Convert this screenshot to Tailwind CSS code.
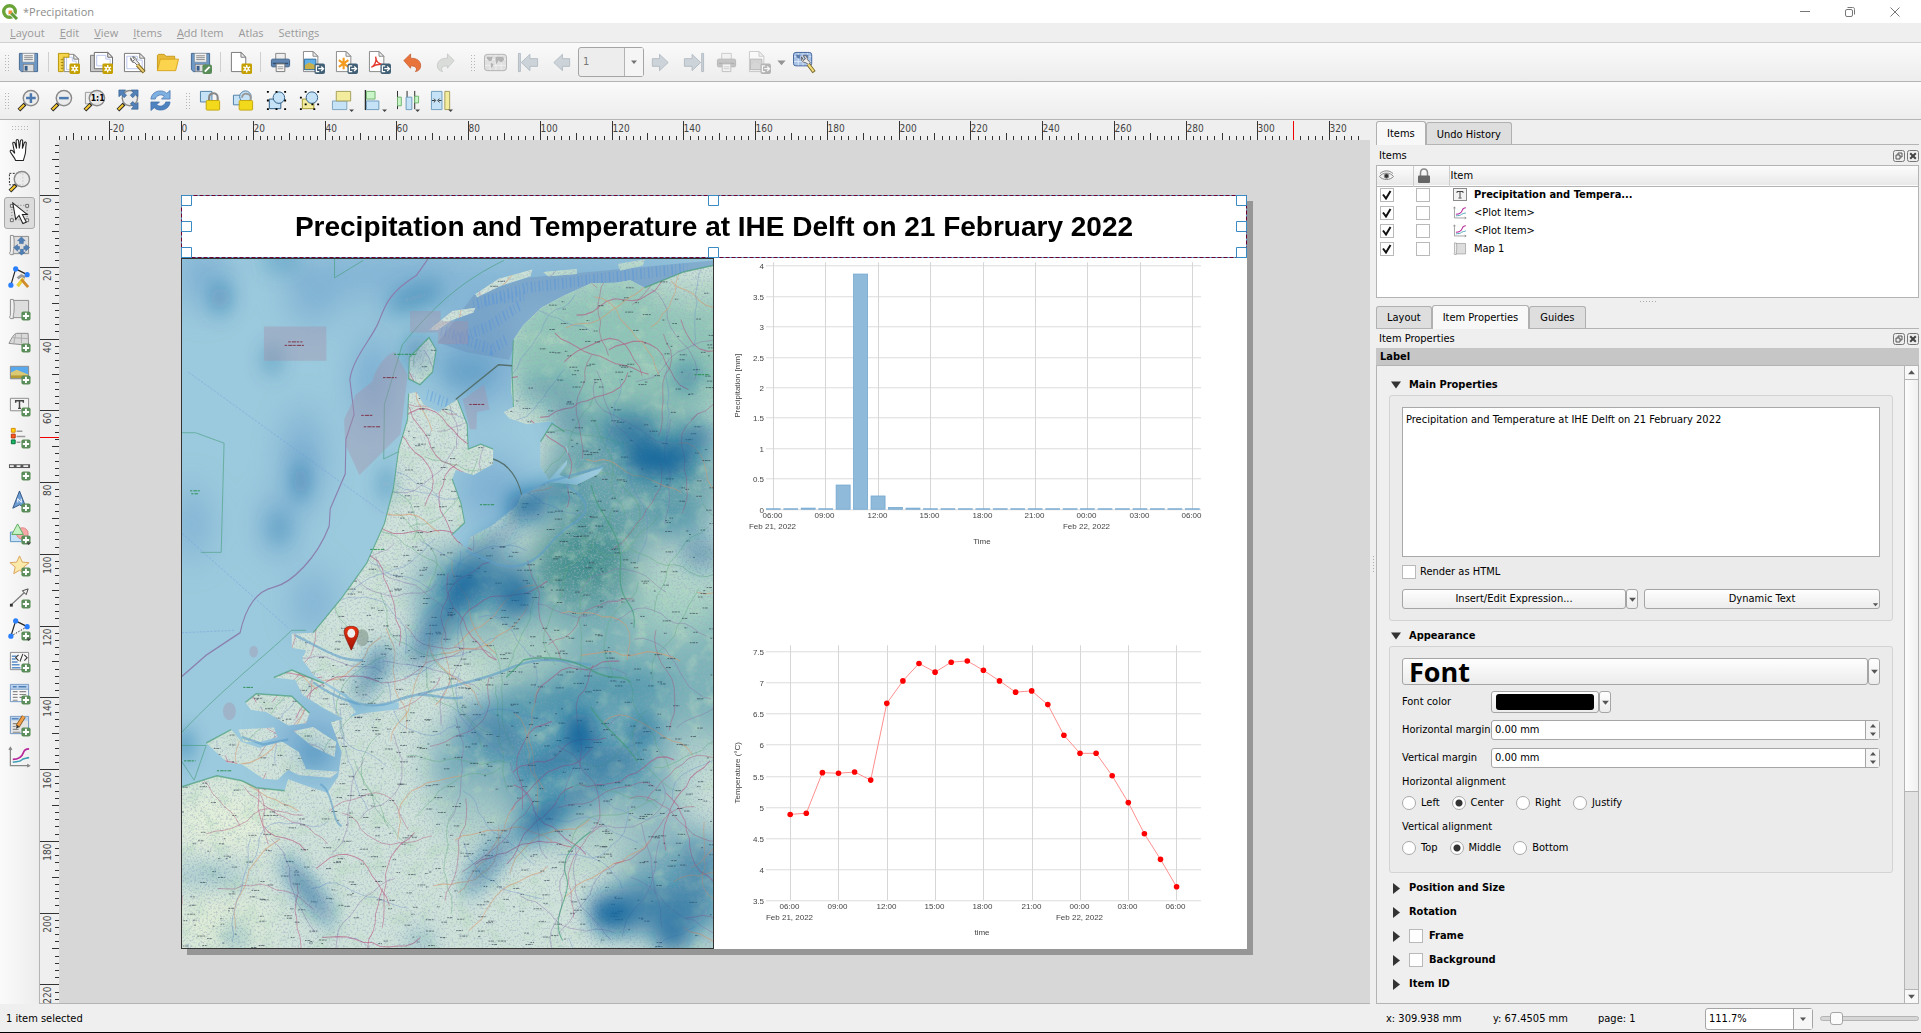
<!DOCTYPE html>
<html lang="en">
<head>
	<meta charset="utf-8">
	<title>*Precipitation</title>
	<script src="https://cdn.jsdelivr.net/npm/@tailwindcss/browser@4"></script>
</head>
<body class="h-screen flex flex-col overflow-hidden bg-[#efefef] text-black text-[11px] leading-[14px] font-['DejaVu_Sans_Condensed','DejaVu_Sans',sans-serif] border-b border-black">

	<!-- icon sprite -->
	<svg class="hidden">
		<symbol id="b-star" viewBox="0 0 24 24"><rect x="13" y="13" width="11" height="11" rx="1.500" fill="#c4a000"/><path d="M18.500 14.500v8M15 16.500l7 4M22 16.500l-7 4" stroke="#fff" stroke-width="1.400"/><circle cx="18.500" cy="18.500" r="2.300" fill="#fff"/><circle cx="18.500" cy="18.500" r="1" fill="#c4a000"/></symbol>
		<symbol id="b-plus" viewBox="0 0 24 24"><rect x="14" y="14" width="9.500" height="9.500" rx="2" fill="#5a8c5a"/><path d="M18.700 15.500v6.500M15.500 18.700h6.500" stroke="#fff" stroke-width="2"/></symbol>
		<symbol id="b-exp" viewBox="0 0 24 24"><rect x="13" y="13" width="11" height="11" rx="2" fill="#415f75"/><path d="M18 15.500h-3v6h3M17 18.500h5M20 16.200l2.500 2.300-2.500 2.300" fill="none" stroke="#fff" stroke-width="1.300"/></symbol>
		<symbol id="b-drop" viewBox="0 0 24 24"><path d="M19 21.500h5l-2.500 2.500z" fill="#444"/></symbol>

		<symbol id="save" viewBox="0 0 24 24"><path d="M2.500 2.500h19v19H4.500l-2-2z" fill="#6d97c4" stroke="#44678f"/><rect x="6" y="2.500" width="12" height="9" fill="#f4f4f4" stroke="#999" stroke-width=".6"/><path d="M7.500 5h9M7.500 7h9M7.500 9h9" stroke="#777" stroke-width=".9"/><rect x="6.500" y="14" width="11" height="7.500" fill="#ddd" stroke="#777" stroke-width=".6"/><rect x="8" y="15.500" width="3" height="5" fill="#355c8a"/></symbol>
		<symbol id="savetpl" viewBox="0 0 24 24"><use href="#save"/><rect x="14" y="14" width="10" height="10" rx="2" fill="#5a8c5a"/><path d="M16.500 21.500l5-5" stroke="#fff" stroke-width="2"/></symbol>
		<symbol id="newlayout" viewBox="0 0 24 24"><path d="M7.500 3.500h10l5 5v13h-15z" fill="#fff" stroke="#888"/><path d="M17.500 3.500v5h5z" fill="#eee" stroke="#777"/><path d="M10 6.500h6v4h4v9H10z" fill="none" stroke="#b8c6ee"/><path d="M1.500 2.500h11v4h-6v15h-5z" fill="#f5d54c" stroke="#b6930a"/><path d="M4 9h2.500M4 12h2.500M4 15h2.500M4 18h2.500" stroke="#8d7208" stroke-width=".8"/><use href="#b-star"/></symbol>
		<symbol id="dup" viewBox="0 0 24 24"><path d="M.5 4.500h17v17H.500z" fill="#c9c9c9" stroke="#777"/><path d="M4.500 1.500h14l5 5v12h-19z" fill="#fff" stroke="#666"/><path d="M18.500 1.500v5h5z" fill="#eee" stroke="#666"/><path d="M7 4.500h9.500v4H21v7H7z" fill="none" stroke="#b8c6ee"/><use href="#b-star"/></symbol>
		<symbol id="manager" viewBox="0 0 24 24"><path d="M1.500 2.500h16l5 5v14h-21z" fill="#fff" stroke="#777"/><path d="M17.500 2.500v5h5z" fill="#eee" stroke="#777"/><path d="M4 5.500h11v4h5v9H4z" fill="none" stroke="#b8c6ee"/><path d="M8 7c0 3 1 5 4 5l3 3 2-2-3-3c0-3-2-4-4-4l2 3-2 2z" fill="#eee" stroke="#555" stroke-width=".9"/><path d="M15 14.500l7 7.500" stroke="#7c6620" stroke-width="4"/><path d="M15 14.500l6.500 7" stroke="#f0d070" stroke-width="2"/></symbol>
		<symbol id="folder" viewBox="0 0 24 24"><path d="M1.500 20.500v-16l1-1h6l2 2h9v3" fill="#e8bc3a" stroke="#c79a1c"/><path d="M1.500 20.500l3-12h19l-3 12z" fill="#fbd34c" stroke="#d6a520"/></symbol>
		<symbol id="addpage" viewBox="0 0 24 24"><path d="M2.500 1.500h10l5 5v15h-15z" fill="#fff" stroke="#777"/><path d="M12.500 1.500v5h5z" fill="#eee" stroke="#777"/><use href="#b-star"/></symbol>
		<symbol id="print" viewBox="0 0 24 24"><path d="M7 9V2.500h10V9" fill="#eee" stroke="#888"/><rect x="2.500" y="8.500" width="19" height="8" rx="1.500" fill="#5f86b3" stroke="#3f5f85"/><path d="M4 13h16" stroke="#334f70" stroke-width="1.500"/><path d="M7.500 13.500h9v8h-9z" fill="#f7f7f7" stroke="#777"/><path d="M9 16.500h6M9 18.500h6" stroke="#999"/></symbol>
		<symbol id="eximg" viewBox="0 0 24 24"><path d="M1.500.5h10l5 5v16h-15z" fill="#fff" stroke="#888"/><path d="M11.500.5v5h5z" fill="#eee" stroke="#888"/><path d="M2.500 8.500h12v11h-12z" fill="#5fb0ea"/><path d="M2.500 15l5-3 7 3v4.500h-12z" fill="#c9b04a"/><path d="M2.500 8.500h12v11h-12z" fill="none" stroke="#2d6b9c"/><use href="#b-exp"/></symbol>
		<symbol id="exsvg" viewBox="0 0 24 24"><path d="M1.500.5h10l5 5v16h-15z" fill="#fff" stroke="#888"/><path d="M11.500.5v5h5z" fill="#eee" stroke="#888"/><path d="M9 7v12M4 9.500l10 7M14 9.500l-10 7" stroke="#f39a1f" stroke-width="2.200"/><use href="#b-exp"/></symbol>
		<symbol id="expdf" viewBox="0 0 24 24"><path d="M1.500.5h10l5 5v16h-15z" fill="#fff" stroke="#888"/><path d="M11.500.5v5h5z" fill="#eee" stroke="#888"/><path d="M3.500 17c4-2 5.500-7 4.500-11 .5 5 3 7.500 7 8-4-.5-8 .5-11.500 3" fill="none" stroke="#e23b2e" stroke-width="1.400"/><use href="#b-exp"/></symbol>
		<symbol id="undo" viewBox="0 0 24 24"><path d="M3 10l7-7v4.500c7 0 10.500 3 10.500 8 0 3-2 5.500-5.500 6 2-2 2-6-5-6V18z" fill="#e8743b" stroke="#c4572a" stroke-width=".8"/></symbol>
		<symbol id="redo" viewBox="0 0 24 24"><path d="M21 10l-7-7v4.500c-7 0-10.500 3-10.500 8 0 3 2 5.500 5.500 6-2-2-2-6 5-6V18z" fill="#d9dcd9" stroke="#c2c6c2" stroke-width=".8"/></symbol>
		<symbol id="atlas" viewBox="0 0 24 24"><rect x=".5" y="3.500" width="23" height="17" rx="3" fill="#c9d5e6" stroke="#6d86ae"/><path d="M1 9h22M1 15h22M6.500 4v16M12.500 4v16M18 4v16" stroke="#eef3fa" stroke-width=".9"/><path d="M3 6h6l-1 4-2 1-3-3zM7 12l3 2-2 4-1-2zM12 6l8 0 1 3-3 3-3-2-2 4-1-4z" fill="#6f8bb3"/></symbol>
		<symbol id="atlasset" viewBox="0 0 24 24"><rect x=".5" y="1.500" width="19" height="14" rx="2.500" fill="#a9c3e6" stroke="#3f629a"/><path d="M1 6h18M1 11h18M5.500 2v13M10.500 2v13M15 2v13" stroke="#e8eef7" stroke-width=".8"/><path d="M3 4h5l-1 4-3-1zM10 4h6l0 3-4 1z" fill="#5f7fae"/><path d="M9 6c-1 4 1 6 4 6l3 2 2-2-3-3c0-3-2-5-4-4l2 3-2 2z" fill="#eee" stroke="#555" stroke-width=".9"/><path d="M16 14l6 8" stroke="#75622a" stroke-width="4"/><path d="M16 14l5.500 7.300" stroke="#f2dc78" stroke-width="2.200"/></symbol>
		<symbol id="prev" viewBox="0 0 24 24"><path d="M4 12l9-8.500V8h7.500v8H13v4.500z" fill="#bcc6cf" stroke="#9aa5b0"/></symbol>
		<symbol id="next" viewBox="0 0 24 24"><path d="M20 12l-9-8.500V8H3.500v8H11v4.500z" fill="#bcc6cf" stroke="#9aa5b0"/></symbol>
		<symbol id="first" viewBox="0 0 24 24"><path d="M1.500 2.500h2v19h-2z" fill="#bcc6cf" stroke="#9aa5b0"/><path d="M4.500 12l9-8.500V8h8v8h-8v4.500z" fill="#bcc6cf" stroke="#9aa5b0"/></symbol>
		<symbol id="last" viewBox="0 0 24 24"><path d="M20.500 2.500h2v19h-2z" fill="#bcc6cf" stroke="#9aa5b0"/><path d="M19.500 12l-9-8.500V8h-8v8h8v4.500z" fill="#bcc6cf" stroke="#9aa5b0"/></symbol>

		<symbol id="lens" viewBox="0 0 24 24"><path d="M8.500 15.500L2 22" stroke="#222" stroke-width="4"/><path d="M7.500 16.500L2.500 21.500" stroke="#f5c731" stroke-width="2.200"/><circle cx="14.500" cy="9.500" r="8" fill="#eaeaea" fill-opacity=".85" stroke="#8a8a8a" stroke-width="1.500"/></symbol>
		<symbol id="zin" viewBox="0 0 24 24"><use href="#lens"/><path d="M14.500 4.500v10M9.500 9.500h10" stroke="#4b78ae" stroke-width="2.600"/></symbol>
		<symbol id="zout" viewBox="0 0 24 24"><use href="#lens"/><path d="M9.500 9.500h10" stroke="#4b78ae" stroke-width="2.600"/></symbol>
		<symbol id="zact" viewBox="0 0 24 24"><path d="M2.500 3.500h14v12h-14z" fill="#eee" stroke="#999"/><use href="#lens"/><text x="8" y="13" font-size="9" font-weight="700">1:1</text></symbol>
		<symbol id="zfull" viewBox="0 0 24 24"><use href="#lens"/><path d="M3 1h7L8 3.500l3 3-2.500 2.500-3-3L3 8zM23 1h-7l2 2.500-3 3 2.500 2.500 3-3L23 8zM23 21h-7l2-2.500-3-3 2.500-2.500 3 3L23 14z" fill="#5381b8" stroke="#34608f" stroke-width=".7"/></symbol>
		<symbol id="refresh" viewBox="0 0 24 24"><path d="M2 10.500C2.500 5 7 2 12 2c3 0 5 1 6.500 2.500L22 1.500v9h-9l3-3C13 5 8 6 6.500 10.500z" fill="#7fb0e2" stroke="#3c6ca8" stroke-width=".7"/><path d="M22 13.500c-.5 5.500-5 8.500-10 8.500-3 0-5-1-6.500-2.500L2 22.500v-9h9l-3 3c3 2.500 8 1.500 9.500-3z" fill="#4f83c0" stroke="#3c6ca8" stroke-width=".7"/></symbol>
		<symbol id="lock" viewBox="0 0 24 24"><path d="M1.500 2.500h12v11h-12z" fill="#c5e2f7" stroke="#4e7fa6"/><path d="M10.500 13V9c0-6 9-6 9 0v4" fill="none" stroke="#888" stroke-width="2.200"/><rect x="7.500" y="12" width="14" height="10" rx="1" fill="#f2d91c" stroke="#c2a60c"/></symbol>
		<symbol id="unlock" viewBox="0 0 24 24"><path d="M1.500 6.500h12v10h-12z" fill="#c5e2f7" stroke="#4e7fa6"/><circle cx="14" cy="8" r="6" fill="#c5e2f7" stroke="#4e7fa6"/><path d="M10.500 9c0-6 9-5 9 0v4" fill="none" stroke="#999" stroke-width="2"/><rect x="7.500" y="12" width="14" height="10" rx="1" fill="#f2d91c" stroke="#c2a60c"/></symbol>
		<symbol id="group" viewBox="0 0 24 24"><path d="M4.500 10.500h12v10h-12z" fill="#c5e2f7" stroke="#2e5d85"/><circle cx="14.500" cy="9" r="6" fill="#c5e2f7" stroke="#2e5d85"/><path d="M2 2h2v2H2zM11 2h2v2h-2zM20 2h2v2h-2zM2 11h2v2H2zM20 11h2v2h-2zM2 20h2v2H2zM11 20h2v2h-2zM20 20h2v2h-2z"/></symbol>
		<symbol id="ungroup" viewBox="0 0 24 24"><path d="M4.500 10.500h12v10h-12z" fill="#f3ec9c" stroke="#a3992f"/><circle cx="14.500" cy="9" r="6" fill="#c5e2f7" stroke="#2e5d85"/><path d="M7 2h2v2H7zM20 2h2v2h-2zM2 8h2v2H2zM7 15h2v2H7zM14 15h2v2h-2zM20 15h2v2h-2zM2 20h2v2H2zM16 20h2v2h-2z"/></symbol>
		<symbol id="raise" viewBox="0 0 24 24"><path d="M1.500 12.500h15v9h-15z" fill="#c5e2f7" stroke="#7da3bd"/><path d="M5.500 2.500h15v10h-15z" fill="#f3ec9c" stroke="#a39d5c"/><use href="#b-drop"/></symbol>
		<symbol id="align" viewBox="0 0 24 24"><path d="M1.500 1v21" stroke="#222" stroke-width="1.400"/><path d="M2.500 2.500h9v8h-9z" fill="#c9f5c9" stroke="#6db36d"/><path d="M2.500 12.500h13v9h-13z" fill="#c5e2f7" stroke="#6d9dbd"/><use href="#b-drop"/></symbol>
		<symbol id="dist" viewBox="0 0 24 24"><path d="M.5 2v19M10.500 2v19M18.500 2v19" stroke="#222"/><path d="M.5 8.500h4v9h-4zM18.500 7.500h4v7h-4z" fill="#c9f5c9" stroke="#6db36d"/><path d="M9.500 8.500h6v13h-6z" fill="#c5e2f7" stroke="#6d9dbd"/><use href="#b-drop"/></symbol>
		<symbol id="resize" viewBox="0 0 24 24"><path d="M1.500 2.500h11v19h-11z" fill="#c5e2f7" stroke="#6d9dbd"/><path d="M15.500 2.500h5v19h-5z" fill="#f3ec9c" stroke="#a39d5c"/><path d="M2 12h3M9 12h3M4 10l2 2-2 2M10 10l-2 2 2 2" fill="none" stroke="#333"/><use href="#b-drop"/></symbol>

		<symbol id="pan" viewBox="0 0 24 24"><path d="M8 23.500c-1-3-4-6-5.500-9-.7-1.500 1-2.500 2.500-1l2 2.500L5 6c-.3-2 2-2 2.300-.5L9 11 8.500 3c0-2 2.300-2 2.500 0l.8 8L13 3c.3-1.700 2.500-1.500 2.300.3L15 11l2-6c.6-1.400 2.300-1 2 .8-.7 4-.3 7-1 10.700l-2 7z" fill="#fff" stroke="#222" stroke-width="1.100"/></symbol>
		<symbol id="zoom" viewBox="0 0 24 24"><path d="M1.500 3.500h14v12h-14z" fill="none" stroke="#222" stroke-dasharray="2 1.500"/><use href="#lens"/></symbol>
		<symbol id="select" viewBox="0 0 24 24"><path d="M4 3.500h16v15H4z" fill="none" stroke="#777" stroke-dasharray="1 2"/><path d="M2.500 2.500h3v3h-3zM18.500 2.500h3v3h-3zM2.500 17.500h3v3h-3zM18.500 17.500h3v3h-3z" fill="#eee" stroke="#666"/><path d="M5 1l3 17 3.500-4 4 8.500 3.500-1.500-4-8h5z" fill="#fff" stroke="#222" stroke-width="1.100"/></symbol>
		<symbol id="scroll" viewBox="0 0 24 24"><path d="M4.500 2.500h17v18h-17z" fill="#ddd" stroke="#8b8b8b"/><path d="M2.500 1.500h3c1.500 3 1 14 0 17v3h-3c-1-1-1-3 0-3z" fill="#f0f0f0" stroke="#8b8b8b"/></symbol>
		<symbol id="movec" viewBox="0 0 24 24"><use href="#scroll"/><path d="M14 3l4 4h-2v3h-4V7h-2zM6 14l4-3v2h2v3h-2v2zM22.500 14l-4-3v2h-2v3h2v2zM14 22l-3-3h2v-3h3v3h2z" fill="#4f7fb5" stroke="#335f92" stroke-width=".5"/></symbol>
		<symbol id="nodes" viewBox="0 0 24 24"><path d="M3 20L8 3l12 6" fill="none" stroke="#222" stroke-width="1.200"/><path d="M10 13l4-3 4 2" fill="none" stroke="#999" stroke-width="3"/><path d="M16 13l-6 8" stroke="#e8cf3a" stroke-width="3.500"/><path d="M14 14l7 8" stroke="#d08a2a" stroke-width="3"/><circle cx="8" cy="3" r="2.700" fill="#2a7fff"/><circle cx="20" cy="9" r="2.700" fill="#2a7fff"/><circle cx="3" cy="20" r="2.700" fill="#2a7fff"/></symbol>
		<symbol id="addmap" viewBox="0 0 24 24"><use href="#scroll"/><use href="#b-plus"/></symbol>
		<symbol id="add3d" viewBox="0 0 24 24"><path d="M1 14C4 8 6 4 9 3.500h12L21.500 16z" fill="#d9d9d9" stroke="#8b8b8b"/><path d="M5 8l16 1M8 4l-2 10M14 4v10" fill="none" stroke="#aaa"/><use href="#b-plus"/></symbol>
		<symbol id="addpic" viewBox="0 0 24 24"><path d="M2.500 4.500h19v13h-19z" fill="#58a8ee"/><path d="M3 11l6-3 12 5v4H3z" fill="#dcc973"/><path d="M3 14h18v3H3z" fill="#b59b35"/><path d="M2.500 4.500h19v13h-19z" fill="none" stroke="#8b8b8b"/><use href="#b-plus"/></symbol>
		<symbol id="addlabel" viewBox="0 0 24 24"><path d="M2.500 4.500h19v13h-19z" fill="#f3f3f3" stroke="#8b8b8b"/><path d="M8 9V7h8v2M12 7v8M10.500 15h3" fill="none" stroke="#444" stroke-width="1.500"/><use href="#b-plus"/></symbol>
		<symbol id="addleg" viewBox="0 0 24 24"><path d="M3.500 2.500h4v4h-4z" fill="#ffd60a" stroke="#d48806"/><path d="M3.500 8.500h4v4h-4z" fill="#ff5a1f" stroke="#b53209"/><path d="M3.500 14.500h4v4h-4z" fill="#17b765" stroke="#0a6e3b"/><path d="M9 5.500h6M9 11h9M9 17h4" stroke="#999" stroke-width="1.600"/><use href="#b-plus"/></symbol>
		<symbol id="addbar" viewBox="0 0 24 24"><path d="M1 8.500h22" stroke="#555" stroke-width="4"/><path d="M2 8.500h4M9 8.500h4M16 8.500h5" stroke="#eee" stroke-width="1.800"/><use href="#b-plus"/></symbol>
		<symbol id="addnorth" viewBox="0 0 24 24"><path d="M12 1L5 19l7-3.500 7 3.500z" fill="#6f9ed4" stroke="#2f5583"/><path d="M10.200 13V9l3.600 4V9" fill="none" stroke="#fff"/><use href="#b-plus"/></symbol>
		<symbol id="addshape" viewBox="0 0 24 24"><path d="M2.500 10.500h12v10h-12z" fill="#c5e2f7" stroke="#5b93c0"/><circle cx="15" cy="12" r="6" fill="#f7a8a8" stroke="#e08080"/><path d="M10 2L4 13h12z" fill="#c3f2c3" stroke="#5fa85f"/><use href="#b-plus"/><use href="#b-drop"/></symbol>
		<symbol id="addstar" viewBox="0 0 24 24"><path d="M12 2l3 6.500 7 .5-5.500 4.500L18 20.500 12 17l-6 3.500 1.500-7L2 9l7-.5z" fill="#fbe9a9" stroke="#d9a35c"/><use href="#b-plus"/></symbol>
		<symbol id="addarrow" viewBox="0 0 24 24"><path d="M3 20L18 6" stroke="#777" stroke-width="1.300"/><path d="M21 3l-2 6-4-4z" fill="#eee" stroke="#444"/><path d="M2 18.500h3v3H2z" fill="#333"/><use href="#b-plus"/></symbol>
		<symbol id="addnode" viewBox="0 0 24 24"><path d="M3 19L8 3l12 6" fill="none" stroke="#222" stroke-width="1.200"/><path d="M3 19L20 9" stroke="#222" stroke-dasharray="1.500 1.500"/><circle cx="8" cy="3" r="2.700" fill="#2a7fff"/><circle cx="20" cy="9" r="2.700" fill="#2a7fff"/><circle cx="3" cy="19" r="2.700" fill="#2a7fff"/><use href="#b-plus"/><use href="#b-drop"/></symbol>
		<symbol id="addhtml" viewBox="0 0 24 24"><path d="M2.500 2.500h19v18h-19z" fill="#f6f6f6" stroke="#8b8b8b"/><path d="M4 6.500h5M4 9.500h4M4 12.500h6M4 15.500h8M4 18.500h9" stroke="#5a8fc9" stroke-width="1.600"/><path d="M11 5L8 8l3 3M17 5l3 3-3 3M15.500 4l-3 8" fill="none" stroke="#333" stroke-width="1.100"/><use href="#b-plus"/></symbol>
		<symbol id="addtbl" viewBox="0 0 24 24"><path d="M2.500 2.500h19v18h-19z" fill="#f6f6f6" stroke="#6d93c2"/><path d="M3 3h18v4H3z" fill="#b8d2ef"/><path d="M5 5h4M11 5h8" stroke="#4f7fb5" stroke-width="1.400"/><path d="M3 7.500h18" stroke="#6d93c2"/><path d="M5 10h5M12 10h7M5 13h5M12 13h7M5 16h5M12 16h3M5 19h5" stroke="#888" stroke-width="1.200"/><use href="#b-plus"/></symbol>
		<symbol id="addfix" viewBox="0 0 24 24"><path d="M2.500 2.500h19v18h-19z" fill="#e4e4e4" stroke="#6d93c2"/><path d="M3 3h18v4H3z" fill="#b8d2ef"/><path d="M4 5h7" stroke="#4f7fb5" stroke-width="1.400"/><path d="M5 10h5M5 13h3M5 16h6M5 19h8" stroke="#888" stroke-width="1.200"/><path d="M16.500 2.500L10 13" stroke="#8a5a22" stroke-width="4.500"/><path d="M16.500 2.500L10.500 12" stroke="#f0a04b" stroke-width="2.800"/><path d="M8.500 15.500l.5-4 3 2z" fill="#333"/><use href="#b-plus"/></symbol>
		<symbol id="plot" viewBox="0 0 24 24"><path d="M2.500 1.500v19h20M1 4l1.500-2.500L4 4M20 19l2.500 1.500L20 22" fill="none" stroke="#888" stroke-width="1.300"/><path d="M5 14c5 0 9-1 11-7 1-3 3-4 6-4" fill="none" stroke="#b5269a" stroke-width="1.800"/><path d="M5 17c4-1 7 0 10-3 2-1.500 4-1 7-2" fill="none" stroke="#3e9db5" stroke-width="1.500"/></symbol>

		<symbol id="dn" viewBox="0 0 8 8"><path d="M1 2.500h6L4 6z" fill="#555"/></symbol>
		<symbol id="up" viewBox="0 0 8 8"><path d="M1 5.500h6L4 2z" fill="#555"/></symbol>
		<symbol id="dock" viewBox="0 0 12 12"><rect x=".5" y=".5" width="11" height="11" rx="2" fill="#eee" stroke="#777"/><path d="M5 5V3h4v4H7M3 5h4v4H3z" fill="none" stroke="#555"/></symbol>
		<symbol id="close" viewBox="0 0 12 12"><rect x=".5" y=".5" width="11" height="11" rx="2" fill="#eee" stroke="#777"/><path d="M3.200 3.200l5.600 5.600M8.800 3.200L3.200 8.800" stroke="#444" stroke-width="2"/></symbol>
	</svg>

	<!-- title bar -->
	<header class="h-[23px] shrink-0 bg-white flex items-center text-[#8c8c8c] font-['Open_Sans',sans-serif]">
		<svg class="ml-[2px] size-4" viewBox="0 0 16 16"><circle cx="7.500" cy="7.500" r="5.800" fill="none" stroke="#6aa338" stroke-width="3.400"/><path d="M8.500 8.500l6.500 6.500" stroke="#fff" stroke-width="4.500"/><path d="M9 9l6 6" stroke="#5f9a34" stroke-width="3"/><path d="M6.500 6.500h4l-1 3-3 1z" fill="#ee9137"/></svg>
		<span class="ml-[5px]">*Precipitation</span>
		<nav class="ml-auto mr-5 flex gap-[33px]">
			<button aria-label="Minimize"><svg class="size-3" viewBox="0 0 12 12"><path d="M1 5.500h10" stroke="#777"/></svg></button>
			<button aria-label="Restore"><svg class="size-3" viewBox="0 0 12 12" fill="none" stroke="#777"><rect x="1.500" y="3.500" width="7" height="7" rx="1.500"/><path d="M3.500 1.500h5c1.500 0 2 .5 2 2v5"/></svg></button>
			<button aria-label="Close"><svg class="size-3" viewBox="0 0 12 12"><path d="M1.500 1.500l9 9M10.500 1.500l-9 9" stroke="#777"/></svg></button>
		</nav>
	</header>

	<!-- menu -->
	<nav class="h-5 shrink-0 flex items-center gap-[15px] pl-[10px] text-[#9a9a9a] border-b border-[#d0d0d0] font-['Open_Sans',sans-serif]">
		<button><u>L</u>ayout</button><button><u>E</u>dit</button><button><u>V</u>iew</button><button><u>I</u>tems</button><button><u>A</u>dd Item</button><button>Atlas</button><button>Settings</button>
	</nav>

	<!-- toolbars -->
	<div class="h-[39px] shrink-0 flex items-center bg-linear-to-b from-[#fafafa] to-[#ededed] border-b border-[#b4b4b4] [&>button]:w-[33px] [&>button]:flex [&>button]:justify-center [&>i]:w-px [&>i]:h-5 [&>i]:mx-[3px] [&>i]:bg-[#cfcfcf] [&>button>svg]:size-[23px]">
		<b class="w-[7px] h-[17px] ml-1 mr-px bg-[radial-gradient(#b5b5b5_1px,transparent_1px)] bg-[size:3px_3px]"></b>
		<button aria-label="Save Project"><svg><use href="#save"/></svg></button>
		<i></i>
		<button aria-label="New Layout"><svg><use href="#newlayout"/></svg></button>
		<button aria-label="Duplicate Layout"><svg><use href="#dup"/></svg></button>
		<button aria-label="Layout Manager"><svg><use href="#manager"/></svg></button>
		<button aria-label="Add Items from Template"><svg><use href="#folder"/></svg></button>
		<button aria-label="Save as Template"><svg><use href="#savetpl"/></svg></button>
		<i></i>
		<button aria-label="Add Pages"><svg><use href="#addpage"/></svg></button>
		<i></i>
		<button aria-label="Print"><svg><use href="#print"/></svg></button>
		<button aria-label="Export as Image"><svg><use href="#eximg"/></svg></button>
		<button aria-label="Export as SVG"><svg><use href="#exsvg"/></svg></button>
		<button aria-label="Export as PDF"><svg><use href="#expdf"/></svg></button>
		<button aria-label="Undo"><svg><use href="#undo"/></svg></button>
		<button aria-label="Redo"><svg><use href="#redo"/></svg></button>
		<b class="w-[7px] h-[17px] ml-2 mr-[2px] bg-[radial-gradient(#b5b5b5_1px,transparent_1px)] bg-[size:3px_3px]"></b>
		<button aria-label="Preview Atlas" class="opacity-60 grayscale"><svg><use href="#atlas"/></svg></button>
		<button aria-label="First Feature" class="opacity-70"><svg><use href="#first"/></svg></button>
		<button aria-label="Previous Feature" class="opacity-70"><svg><use href="#prev"/></svg></button>
		<div class="relative w-[66px] h-[30px]">
			<select aria-label="Atlas page" class="appearance-none size-full pl-1 rounded-[3px] border border-[#a5a5a5] bg-[#ededed] text-[#777]"><option>1</option></select>
			<svg class="absolute right-px top-px w-[19px] h-7 p-[5px] bg-[#f7f7f7] border-l border-[#a5a5a5] pointer-events-none opacity-80"><use href="#dn"/></svg>
		</div>
		<button aria-label="Next Feature" class="opacity-70"><svg><use href="#next"/></svg></button>
		<button aria-label="Last Feature" class="opacity-70"><svg><use href="#last"/></svg></button>
		<button aria-label="Print Atlas" class="opacity-40 grayscale"><svg><use href="#print"/></svg></button>
		<button aria-label="Export Atlas" class="opacity-40 grayscale"><svg><use href="#eximg"/></svg></button>
		<svg class="size-[11px] mr-px opacity-60"><use href="#dn"/></svg>
		<button aria-label="Atlas Settings"><svg><use href="#atlasset"/></svg></button>
	</div>
	<div class="h-[38px] shrink-0 flex items-center bg-linear-to-b from-[#fafafa] to-[#ededed] border-b border-[#b4b4b4] [&>button]:w-[33px] [&>button]:flex [&>button]:justify-center [&_svg]:size-[23px]">
		<b class="w-[7px] h-[17px] ml-1 mr-px bg-[radial-gradient(#b5b5b5_1px,transparent_1px)] bg-[size:3px_3px]"></b>
		<button aria-label="Zoom In"><svg><use href="#zin"/></svg></button>
		<button aria-label="Zoom Out"><svg><use href="#zout"/></svg></button>
		<button aria-label="Zoom to 100%"><svg><use href="#zact"/></svg></button>
		<button aria-label="Zoom Full"><svg><use href="#zfull"/></svg></button>
		<button aria-label="Refresh View"><svg><use href="#refresh"/></svg></button>
		<b class="w-[7px] h-[17px] ml-2 mr-[2px] bg-[radial-gradient(#b5b5b5_1px,transparent_1px)] bg-[size:3px_3px]"></b>
		<button aria-label="Lock Items"><svg><use href="#lock"/></svg></button>
		<button aria-label="Unlock Items"><svg><use href="#unlock"/></svg></button>
		<button aria-label="Group"><svg><use href="#group"/></svg></button>
		<button aria-label="Ungroup"><svg><use href="#ungroup"/></svg></button>
		<button aria-label="Raise"><svg><use href="#raise"/></svg></button>
		<button aria-label="Align"><svg><use href="#align"/></svg></button>
		<button aria-label="Distribute"><svg><use href="#dist"/></svg></button>
		<button aria-label="Resize"><svg><use href="#resize"/></svg></button>
	</div>

	<main class="flex-1 min-h-0 flex">
		<!-- toolbox -->
		<div class="w-10 shrink-0 flex flex-col items-center border-r border-[#b4b4b4] bg-linear-to-r from-[#fafafa] to-[#ededed] [&>button]:w-[31px] [&>button]:h-8 [&>button]:shrink-0 [&>button]:flex [&>button]:items-center [&>button]:justify-center [&_svg]:size-[23px]">
			<b class="w-[17px] h-[6px] mt-[5px] mb-[2px] shrink-0 bg-[radial-gradient(#b5b5b5_1px,transparent_1px)] bg-[size:3px_3px]"></b>
			<button aria-label="Pan"><svg><use href="#pan"/></svg></button>
			<button aria-label="Zoom"><svg><use href="#zoom"/></svg></button>
			<button aria-label="Select/Move Item" class="rounded-[3px] border border-[#a9a9a9] bg-[#dcdcdc]"><svg><use href="#select"/></svg></button>
			<button aria-label="Move Content"><svg><use href="#movec"/></svg></button>
			<button aria-label="Edit Nodes"><svg><use href="#nodes"/></svg></button>
			<button aria-label="Add Map"><svg><use href="#addmap"/></svg></button>
			<button aria-label="Add 3D Map"><svg><use href="#add3d"/></svg></button>
			<button aria-label="Add Picture"><svg><use href="#addpic"/></svg></button>
			<button aria-label="Add Label"><svg><use href="#addlabel"/></svg></button>
			<button aria-label="Add Legend"><svg><use href="#addleg"/></svg></button>
			<button aria-label="Add Scale Bar"><svg><use href="#addbar"/></svg></button>
			<button aria-label="Add North Arrow"><svg><use href="#addnorth"/></svg></button>
			<button aria-label="Add Shape"><svg><use href="#addshape"/></svg></button>
			<button aria-label="Add Marker"><svg><use href="#addstar"/></svg></button>
			<button aria-label="Add Arrow"><svg><use href="#addarrow"/></svg></button>
			<button aria-label="Add Node Item"><svg><use href="#addnode"/></svg></button>
			<button aria-label="Add HTML"><svg><use href="#addhtml"/></svg></button>
			<button aria-label="Add Attribute Table"><svg><use href="#addtbl"/></svg></button>
			<button aria-label="Add Fixed Table"><svg><use href="#addfix"/></svg></button>
			<button aria-label="Add Plot Item"><svg><use href="#plot"/></svg></button>
		</div>

		<!-- rulers + canvas -->
		<div class="flex-1 min-w-0 flex flex-col border-b border-[#b4b4b4]">
			<svg id="hruler" class="w-full h-5 shrink-0 text-[10px] fill-[#444]"></svg>
			<div class="flex-1 min-h-0 flex">
				<svg id="vruler" class="w-[19px] h-full shrink-0 text-[10px] fill-[#444]"></svg>
				<div class="relative flex-1 overflow-hidden bg-[#d7d7d7]">
					<!-- A4 sheet -->
					<section class="absolute left-[122px] top-[55px] w-[1066px] h-[754px] bg-white shadow-[6px_6px_0_#969696] flex flex-col">
						<h1 class="relative h-[63px] shrink-0 flex items-center justify-center font-['Liberation_Sans',sans-serif] font-bold text-[28px]">
							Precipitation and Temperature at IHE Delft on 21 February 2022
							<svg class="absolute inset-0 size-full" viewBox="0 0 1066 63" fill="none">
								<path d="M.5.5h1065v62H.500z" stroke="#5aa2cf"/><path d="M.5.5h1065v62H.500z" stroke="#6b0030" stroke-dasharray="4 2"/>
								<path d="M.5.5h10v10h-10zM.5 26.500h10v10h-10zM.5 52.500h10v10h-10zM527.500.5h10v10h-10zM527.500 52.500h10v10h-10zM1055.500.5h10v10h-10zM1055.500 26.500h10v10h-10zM1055.500 52.500h10v10h-10z" stroke="#3a8bc4"/>
							</svg>
						</h1>
						<div class="flex-1 min-h-0 flex">
							<svg id="map" class="w-[533px] border border-[#333] shrink-0" viewBox="32 157 1490 1388" preserveAspectRatio="none">
								<defs>
									<filter id="f20" x="-80%" y="-80%" width="260%" height="260%"><feGaussianBlur stdDeviation="24"/></filter>
									<filter id="f40" x="-60%" y="-60%" width="220%" height="220%"><feGaussianBlur stdDeviation="42"/></filter>
									<filter id="grain" x="0" y="0" width="100%" height="100%"><feTurbulence type="fractalNoise" baseFrequency=".18 .25" numOctaves="3" seed="4"/><feColorMatrix values="0 0 0 0 .35  0 0 0 0 .42  0 0 0 0 .55  0 3 0 0 -1.450"/></filter>
									<filter id="grain2" x="0" y="0" width="100%" height="100%"><feTurbulence type="fractalNoise" baseFrequency=".02 .03" numOctaves="4" seed="9"/><feColorMatrix values="0 0 0 0 .47  0 0 0 0 .7  0 0 0 0 .52  0 3 0 0 -1.500"/></filter>
									<clipPath id="land">
										<path d="M1522 170L1440 183 1330 215 1290 200 1250 205 1180 206 1100 232 1040 255 990 290 962 320 958 380 955 420 962 455 935 465 950 478 1000 490 1040 486 1075 484 1090 500 1115 540 1112 570 1090 592 1120 600 1215 575 1200 590 1140 612 1060 606 985 632 970 655 900 695 840 718 832 742 790 712 825 688 815 650 790 600 800 582 850 592 905 570 905 540 870 530 835 540 832 490 805 440 750 465 710 450 690 425 668 428 665 480 640 540 625 620 600 690 550 770 480 840 400 910 340 912 340 940 380 945 370 965 400 992 470 1010 500 1040 540 1058 640 1050 640 1064 540 1072 450 1090 480 1150 470 1200 440 1232 380 1218 330 1205 320 1228 240 1222 200 1208 130 1198 32 1220V1545H1522z"/>
										<path d="M1038 525L1070 488 1105 505 1115 560 1062 602 1038 575zM725 315L745 340 735 385 700 410 668 398 670 355zM725 300L790 262 855 255 850 265 790 280 750 300zM855 228L920 197 1015 178 1010 192 930 210 860 234zM1045 183L1140 177 1140 187 1060 192zM1255 167L1330 158 1325 170 1262 180z"/>
										<path d="M290 1000L340 985 430 1012 490 1040 520 1070 490 1085 430 1062 370 1035 350 1005zM210 1050L240 1033 340 1038 390 1072 380 1092 330 1097 270 1070 225 1065zM345 1108L400 1100 465 1130 460 1160 400 1140zM190 1105L290 1101 300 1120 250 1130 205 1130zM100 1132L170 1105 200 1130 250 1142 310 1128 360 1150 380 1185 470 1190 450 1202 360 1197 330 1186 300 1206 260 1204 200 1175 160 1172zM370 958L410 940 470 975 515 1040 480 1030 400 995z"/>
									</clipPath>
									<linearGradient id="pin" x2="0" y2="1"><stop stop-color="#e8320f"/><stop offset="1" stop-color="#a01405"/></linearGradient>
								</defs>
								<rect x="32" y="157" width="1490" height="1388" fill="#9bc9dd"/>
								<g filter="url(#f40)" fill="#74a7cf" opacity=".8">
									<ellipse cx="370" cy="560" rx="60" ry="90"/><ellipse cx="300" cy="690" rx="50" ry="50"/><ellipse cx="60" cy="690" rx="50" ry="60"/><ellipse cx="400" cy="850" rx="60" ry="50"/><ellipse cx="400" cy="230" rx="70" ry="50"/><ellipse cx="860" cy="350" rx="120" ry="110"/><ellipse cx="900" cy="620" rx="100" ry="60"/><ellipse cx="620" cy="190" rx="300" ry="40"/><ellipse cx="1150" cy="200" rx="380" ry="40"/><ellipse cx="90" cy="190" rx="80" ry="50"/><ellipse cx="400" cy="1130" rx="120" ry="60"/><ellipse cx="570" cy="400" rx="60" ry="90"/>
								</g>
								<path d="M850 230L1000 195 1522 160V190L1330 215 1100 235 980 300 950 360 830 345 750 325z" fill="#6f93bd" opacity=".45"/>
								<path d="M850 250L1000 215 1450 175M800 320L900 290 980 250M760 300L900 340 940 320M720 430L780 450M880 240L1000 230" fill="none" stroke="#4a8fe0" stroke-width="22" stroke-dasharray="2 9 4 7" opacity=".4"/>
								<g clip-path="url(#land)">
									<rect x="32" y="157" width="1490" height="1388" fill="#d0e3da"/>
									<g filter="url(#f40)"><ellipse cx="1300" cy="340" rx="380" ry="160" fill="#8ec6b6"/><ellipse cx="1300" cy="600" rx="260" ry="140" fill="#68a5ac"/><ellipse cx="1330" cy="980" rx="420" ry="200" fill="#7ab3b8"/><ellipse cx="1100" cy="1180" rx="380" ry="140" fill="#68a6b6"/><ellipse cx="1150" cy="770" rx="150" ry="80" fill="#438f8d"/><ellipse cx="840" cy="830" rx="160" ry="90" fill="#64a3b3"/><ellipse cx="1420" cy="850" rx="130" ry="60" fill="#a9d5c3"/><ellipse cx="950" cy="945" rx="180" ry="40" fill="#b5d8c8"/><ellipse cx="1250" cy="1330" rx="150" ry="60" fill="#b4d3cb"/><ellipse cx="1440" cy="1420" rx="180" ry="120" fill="#6fa9b8"/><ellipse cx="1470" cy="1170" rx="90" ry="50" fill="#bcd9d2"/><ellipse cx="150" cy="1290" rx="160" ry="60" fill="#e6f2da"/><ellipse cx="150" cy="1500" rx="140" ry="50" fill="#e4f1d6"/><ellipse cx="850" cy="1270" rx="110" ry="60" fill="#a5cbc6"/><ellipse cx="1450" cy="200" rx="90" ry="24" fill="#d2e4dc"/></g>
									<rect x="32" y="157" width="1490" height="1388" filter="url(#grain2)" opacity=".5"/>
									<rect x="32" y="157" width="1490" height="1388" filter="url(#grain)" opacity=".6"/>
									<g id="towns" fill="none"></g>
								</g>
								<!-- rainfall raster -->
								<g filter="url(#f20)" fill="#12629c">
									<ellipse cx="685" cy="235" rx="85" ry="16" opacity=".6" transform="rotate(-12 685 235)"/><ellipse cx="140" cy="235" rx="35" ry="24" opacity=".5"/><ellipse cx="365" cy="605" rx="24" ry="34" opacity=".5"/><ellipse cx="285" cy="360" rx="35" ry="20" opacity=".4"/><ellipse cx="305" cy="700" rx="40" ry="30" opacity=".25"/>
									<ellipse cx="310" cy="160" rx="60" ry="12" opacity=".5"/><ellipse cx="40" cy="1135" rx="26" ry="18" opacity=".8"/><ellipse cx="690" cy="345" rx="40" ry="35" opacity=".4"/><ellipse cx="605" cy="610" rx="25" ry="26" opacity=".4"/><ellipse cx="400" cy="1155" rx="50" ry="18" opacity=".4"/><ellipse cx="830" cy="385" rx="80" ry="16" opacity=".3"/>
									<ellipse cx="1370" cy="560" rx="100" ry="36" opacity=".95"/><ellipse cx="1285" cy="500" rx="75" ry="26" opacity=".7"/><ellipse cx="1480" cy="515" rx="55" ry="22" opacity=".7"/><ellipse cx="1450" cy="395" rx="45" ry="20" opacity=".65"/><ellipse cx="1060" cy="420" rx="90" ry="24" opacity=".35"/><ellipse cx="1490" cy="750" rx="60" ry="30" opacity=".5"/><ellipse cx="1430" cy="680" rx="80" ry="24" opacity=".3"/>
									<ellipse cx="1000" cy="655" rx="60" ry="26" opacity=".95"/><ellipse cx="1080" cy="625" rx="70" ry="18" opacity=".55"/><ellipse cx="900" cy="730" rx="90" ry="20" opacity=".5" transform="rotate(-25 900 730)"/><ellipse cx="975" cy="845" rx="50" ry="24" opacity="1"/><ellipse cx="815" cy="820" rx="50" ry="40" opacity=".75"/><ellipse cx="900" cy="800" rx="110" ry="38" opacity=".5"/><ellipse cx="745" cy="900" rx="80" ry="36" opacity=".6" transform="rotate(-40 745 900)"/><ellipse cx="690" cy="960" rx="50" ry="20" opacity=".4"/><ellipse cx="580" cy="975" rx="45" ry="26" opacity=".75" transform="rotate(-35 580 975)"/><ellipse cx="535" cy="1025" rx="30" ry="24" opacity=".5"/>
									<ellipse cx="1150" cy="1110" rx="46" ry="38" opacity=".95"/><ellipse cx="1080" cy="1165" rx="110" ry="24" opacity=".7" transform="rotate(-18 1080 1165)"/><ellipse cx="900" cy="1110" rx="110" ry="36" opacity=".4" transform="rotate(20 900 1110)"/><ellipse cx="1000" cy="1060" rx="140" ry="28" opacity=".3"/><ellipse cx="1240" cy="1170" rx="80" ry="34" opacity=".45"/><ellipse cx="1325" cy="1105" rx="40" ry="20" opacity=".8"/><ellipse cx="1230" cy="1020" rx="180" ry="34" opacity=".3"/><ellipse cx="1040" cy="1285" rx="80" ry="24" opacity=".9" transform="rotate(-25 1040 1285)"/><ellipse cx="890" cy="1375" rx="90" ry="24" opacity=".65" transform="rotate(-38 890 1375)"/><ellipse cx="1160" cy="1225" rx="80" ry="24" opacity=".4" transform="rotate(-30 1160 1225)"/>
									<ellipse cx="385" cy="1430" rx="100" ry="15" opacity="1" transform="rotate(40 385 1430)"/><ellipse cx="110" cy="1397" rx="110" ry="10" opacity=".5"/><ellipse cx="180" cy="1522" rx="40" ry="14" opacity=".5"/><ellipse cx="1240" cy="1480" rx="65" ry="34" opacity=".95"/><ellipse cx="1340" cy="1465" rx="180" ry="46" opacity=".55"/><ellipse cx="1410" cy="1525" rx="50" ry="22" opacity=".85"/><ellipse cx="1480" cy="1380" rx="60" ry="50" opacity=".35"/><ellipse cx="700" cy="1530" rx="50" ry="14" opacity=".35"/><ellipse cx="1120" cy="480" rx="60" ry="30" opacity=".35"/>
								</g>
								<!-- rivers, restricted areas and boundaries -->
								<g fill="none" stroke="#5e9dc8" stroke-width="5" opacity=".6">
									<path d="M350 915C420 940 480 970 540 965M400 1010C480 1050 560 1070 640 1045S760 1050 820 1040M640 1045C760 1020 860 1010 940 985S1060 960 1180 975M1215 575L1060 606 985 632M830 745C880 760 940 790 1000 770S1060 720 1130 690 1150 630 1110 612M420 1215C460 1230 450 1290 480 1300M200 1120L260 1135 330 1125"/>
								</g>
								<g fill="none" stroke="#3f9a72" stroke-width="3" opacity=".65">
									<path d="M942 1000L990 965C1040 955 1120 960 1180 985S1260 990 1290 1010M1180 612C1200 680 1270 700 1262 780S1310 840 1300 900M1180 1060C1210 1100 1280 1130 1310 1170M1100 1530C1060 1480 1130 1440 1110 1400S1140 1330 1180 1310"/>
									<path d="M32 507H70L150 528 142 748H85M460 157V195L540 160M32 1110C150 1020 260 960 340 905L380 905M32 1137H100L66 1207 32 1170M935 160C820 200 740 250 650 330L600 450 598 560 640 545" stroke-width="2"/>
									<path d="M668 428L665 480 640 540 625 620 600 690 550 770 480 840 400 910M962 320L958 380 962 455M905 540L870 530 835 540 832 490 805 440M1038 525L1070 488 1105 505M32 1220L130 1198 200 1208 240 1222 320 1228M1522 170L1440 183 1330 215M725 315L745 340 735 385 700 410 668 398 670 355zM790 600L815 650 825 688 790 712M100 1132L170 1105M210 1050L240 1033 340 1038 390 1072M290 1000L340 985 430 1012"/>
								</g>
								<path d="M722 157L690 190C600 230 600 260 580 290S510 360 503 400L515 470 492 520 490 590 448 660 445 695C410 760 340 810 290 818S210 860 195 910L100 955 32 998" fill="none" stroke="#8b7fae" stroke-width="3"/>
								<path d="M50 385L600 670M32 710L330 900M32 910L180 905" stroke="#6f9be0" stroke-width="1.500" stroke-dasharray="6 4" opacity=".7"/>
								<path d="M800 440L920 370 958 372M905 560C950 570 975 600 985 632" fill="none" stroke="#53706d" stroke-width="3"/>
								<g fill="#a78ea6" opacity=".36"><path d="M262 293H437V362H262zM672 262H758V305H672zM750 282H835V328H750zM565 405C580 370 610 345 630 345L665 390 645 510 530 592 490 530 487 480 520 430zM820 440L880 410 895 460 860 465 858 500 840 500z"/><circle cx="233" cy="948" r="12"/><circle cx="165" cy="1068" r="18"/></g>
								<g stroke="#7a1f33" stroke-width="2" stroke-dasharray="7 3 12 2"><path d="M330 324h40M320 331h54M596 396h38M535 472h32M542 495h48M838 450h42"/></g>
								<g stroke="#1c8a3e" stroke-width="2" stroke-dasharray="6 3 10 2"><path d="M55 624h28M58 630h20M627 349h60M868 652h40M560 742h42M204 1020h28M38 1168h32M130 1188h40M1470 390h40"/></g>
								<ellipse cx="538" cy="920" rx="18" ry="17" fill="#7d8f86" opacity=".55"/>
								<path d="M507 945L491 920C480 900 495 897 507 897S534 900 523 920z" fill="url(#pin)" stroke="#7d1206" stroke-width="1.500"/><ellipse cx="507" cy="911" rx="11" ry="9" fill="#eee"/>
							</svg>
							<div class="flex-1 flex flex-col font-['Liberation_Sans',sans-serif] text-[8px] fill-[#444]">
								<svg id="bars" class="flex-1" viewBox="714 259 533 345"></svg>
								<svg id="temps" class="flex-1" viewBox="714 604 533 345"></svg>
							</div>
						</div>
					</section>
				</div>
			</div>
		</div>
		<div class="w-[6px] shrink-0 flex items-center justify-center pt-1"><b class="w-[3px] h-[18px] bg-[radial-gradient(#aaa_1px,transparent_1px)] bg-[size:3px_3px]"></b></div>

		<!-- docks -->
		<aside class="w-[545px] pr-[2px] shrink-0 flex flex-col">
			<div class="h-[25px] shrink-0 flex items-end border-b border-[#b4b4b4] [&>button]:px-[10px] [&>button]:border [&>button]:border-b-0 [&>button]:border-[#b0b0b0] [&>button]:rounded-t-[3px]">
				<button class="h-6 bg-[#f8f8f8] relative top-px">Items</button><button class="h-[22px] pt-[2px] bg-[#dedede]">Undo History</button>
			</div>
			<div class="h-5 shrink-0 flex items-center pl-[3px] pt-px gap-[2px]"><h2 class="mr-auto">Items</h2><button aria-label="Float"><svg class="size-3"><use href="#dock"/></svg></button><button aria-label="Close"><svg class="size-3"><use href="#close"/></svg></button></div>
			<div class="h-[133px] shrink-0 bg-white border border-[#b4b4b4]">
				<table class="w-full table-fixed [&_td]:p-0 [&_td]:h-[18px] [&_td]:align-middle [&_th]:p-0 [&_th]:font-normal [&_th]:text-left [&_input]:appearance-none [&_input]:block [&_input]:size-[14px] [&_input]:ml-[3px] [&_input]:border [&_input]:border-[#b9b9b9] [&_input]:bg-white">
					<thead><tr class="h-5 bg-linear-to-b from-[#fcfcfc] to-[#e9e9e9] border-b border-[#b4b4b4]">
						<th class="w-9"><svg class="w-[15px] h-3 ml-[2px]" viewBox="0 0 15 12" fill="none" stroke="#888"><path d="M.5 6.500C4 2 11 2 14.500 6.500 11 10.500 4 10.500.500 6.500z"/><circle cx="7.500" cy="6" r="2.300" fill="#333"/><path d="M1 3.500c4-3.500 9-3.500 13 0"/></svg></th>
						<th class="w-9 border-l border-[#ccc]"><svg class="w-3 h-[15px] ml-1" viewBox="0 0 12 15"><path d="M2.500 8V5c0-5.500 7-5.500 7 0v3" fill="none" stroke="#888" stroke-width="1.500"/><rect y="7.500" width="12" height="7.500" rx="1" fill="#666"/></svg></th>
						<th class="border-l border-[#ccc]"><span class="pl-px">Item</span></th>
					</tr></thead>
					<tbody>
						<tr><td><span class="relative block"><input type="checkbox" checked aria-label="Visible"><svg class="absolute left-[5px] top-[2px] size-[10px] pointer-events-none" viewBox="0 0 10 10"><path d="M1 4.500l3 4L8.500 1" fill="none" stroke="#111" stroke-width="2"/></svg></span></td><td><input type="checkbox" aria-label="Locked"></td><td><span class="flex items-center pl-1 gap-[7px] font-bold"><svg class="size-[14px]" viewBox="0 0 14 14"><rect x=".5" y=".5" width="13" height="12" fill="#f3f3f3" stroke="#8b8b8b"/><path d="M4 5V3.500h6V5M7 3.500v6M5.500 10h3" fill="none" stroke="#444"/></svg>Precipitation and Tempera...</span></td></tr>
						<tr><td><span class="relative block"><input type="checkbox" checked aria-label="Visible"><svg class="absolute left-[5px] top-[2px] size-[10px] pointer-events-none" viewBox="0 0 10 10"><path d="M1 4.500l3 4L8.500 1" fill="none" stroke="#111" stroke-width="2"/></svg></span></td><td><input type="checkbox" aria-label="Locked"></td><td><span class="flex items-center pl-1 gap-[7px]"><svg class="size-[14px]"><use href="#plot"/></svg>&lt;Plot Item&gt;</span></td></tr>
						<tr><td><span class="relative block"><input type="checkbox" checked aria-label="Visible"><svg class="absolute left-[5px] top-[2px] size-[10px] pointer-events-none" viewBox="0 0 10 10"><path d="M1 4.500l3 4L8.500 1" fill="none" stroke="#111" stroke-width="2"/></svg></span></td><td><input type="checkbox" aria-label="Locked"></td><td><span class="flex items-center pl-1 gap-[7px]"><svg class="size-[14px]"><use href="#plot"/></svg>&lt;Plot Item&gt;</span></td></tr>
						<tr><td><span class="relative block"><input type="checkbox" checked aria-label="Visible"><svg class="absolute left-[5px] top-[2px] size-[10px] pointer-events-none" viewBox="0 0 10 10"><path d="M1 4.500l3 4L8.500 1" fill="none" stroke="#111" stroke-width="2"/></svg></span></td><td><input type="checkbox" aria-label="Locked"></td><td><span class="flex items-center pl-1 gap-[7px]"><svg class="size-[14px]"><use href="#scroll"/></svg>Map 1</span></td></tr>
					</tbody>
				</table>
			</div>
			<div class="h-[6px] shrink-0 flex items-center justify-center"><b class="w-[18px] h-[3px] bg-[radial-gradient(#aaa_1px,transparent_1px)] bg-[size:3px_3px]"></b></div>
			<div class="h-[25px] shrink-0 flex items-end border-b border-[#b4b4b4] [&>button]:px-[10px] [&>button]:border [&>button]:border-b-0 [&>button]:border-[#b0b0b0] [&>button]:rounded-t-[3px]">
				<button class="h-[22px] pt-px bg-[#dedede]">Layout</button><button class="h-6 bg-[#f8f8f8] relative top-px">Item Properties</button><button class="h-[22px] pt-px bg-[#dedede]">Guides</button>
			</div>
			<div class="h-[19px] shrink-0 flex items-center pl-[3px] pt-px gap-[2px]"><h2 class="mr-auto">Item Properties</h2><button aria-label="Float"><svg class="size-3"><use href="#dock"/></svg></button><button aria-label="Close"><svg class="size-3"><use href="#close"/></svg></button></div>
			<h3 class="h-[17px] shrink-0 bg-[#c6c6c6] font-bold pl-1 leading-[18px]">Label</h3>

			<div class="flex-1 min-h-0 flex border border-[#b4b4b4]">
				<form class="flex-1 overflow-hidden pl-3 pr-[11px] pt-3 [&_h4]:flex [&_h4]:items-center [&_h4]:font-bold [&_h4]:h-[14px]">
					<h4 class="gap-2 pl-[2px]"><svg class="w-[10px] h-2" viewBox="0 0 10 8"><path d="M0 .5h10L5 7.500z" fill="#333"/></svg>Main Properties</h4>
					<fieldset class="mt-[3px] border border-[#d3d3d3] rounded-[3px] bg-[#ebebeb] px-3 pt-[11px] pb-3 h-[226px]">
						<textarea aria-label="Label text" class="block w-full h-[150px] resize-none bg-white border border-[#a9a9a9] px-[3px] py-[5px]">Precipitation and Temperature at IHE Delft on 21 February 2022</textarea>
						<label class="mt-2 flex items-center gap-1"><input type="checkbox" class="appearance-none size-[14px] bg-white border border-[#b9b9b9]">Render as HTML</label>
						<div class="mt-[10px] flex h-5 [&>button]:border [&>button]:border-[#a5a5a5] [&>button]:rounded-[3px] [&>button]:bg-linear-to-b [&>button]:from-[#fefefe] [&>button]:to-[#ececec]">
							<button type="button" class="flex-[224]">Insert/Edit Expression...</button>
							<button type="button" aria-label="Expression menu" class="w-3 flex items-center justify-center"><svg class="size-[9px]"><use href="#dn"/></svg></button>
							<button type="button" class="relative flex-[236] ml-[6px]">Dynamic Text<svg class="absolute right-0 bottom-0 size-[7px]"><use href="#dn"/></svg></button>
						</div>
					</fieldset>
					<h4 class="mt-2 gap-2 pl-[2px]"><svg class="w-[10px] h-2" viewBox="0 0 10 8"><path d="M0 .5h10L5 7.500z" fill="#333"/></svg>Appearance</h4>
					<fieldset class="mt-[3px] border border-[#d3d3d3] rounded-[3px] bg-[#ebebeb] px-3 pt-[11px] h-[227px] [&_input[type=radio]]:appearance-none [&_input[type=radio]]:size-[14px] [&_input[type=radio]]:rounded-full [&_input[type=radio]]:border [&_input[type=radio]]:border-[#a9a9a9] [&_input[type=radio]]:bg-white [&_input[type=radio]:checked]:bg-[radial-gradient(#333_3px,#fff_4px)]">
						<div class="flex h-[27px] [&>button]:border [&>button]:border-[#a5a5a5] [&>button]:rounded-[3px] [&>button]:bg-linear-to-b [&>button]:from-[#fefefe] [&>button]:to-[#ececec]">
							<button type="button" class="flex-1 flex items-center pl-[6px] text-[27px] leading-6 font-bold font-['Open_Sans',sans-serif]">Font</button>
							<button type="button" aria-label="Font menu" class="w-3 flex items-center justify-center"><svg class="size-[9px]"><use href="#dn"/></svg></button>
						</div>
						<div class="mt-[6px] flex items-center h-[22px] [&>button]:h-full [&>button]:border [&>button]:border-[#a5a5a5] [&>button]:rounded-[3px] [&>button]:bg-linear-to-b [&>button]:from-[#fefefe] [&>button]:to-[#ececec]">
							<span class="w-[89px]">Font color</span>
							<button type="button" aria-label="Font color" class="w-[108px] p-[2px] px-1"><span class="block size-full bg-black rounded-[3px]"></span></button>
							<button type="button" aria-label="Color menu" class="w-3 flex items-center justify-center"><svg class="size-[9px]"><use href="#dn"/></svg></button>
						</div>
						<div class="mt-[7px] flex items-center h-5">
							<label for="hm" class="w-[89px] whitespace-nowrap">Horizontal margin</label>
							<div class="flex-1 h-full flex bg-white border border-[#a5a5a5] rounded-[3px]"><input id="hm" class="flex-1 min-w-0 pl-[3px]" value="0.00 mm"><span class="w-[14px] flex flex-col items-center justify-center border-l border-[#a5a5a5] bg-[#f4f4f4]"><svg class="size-2"><use href="#up"/></svg><svg class="size-2"><use href="#dn"/></svg></span></div>
						</div>
						<div class="mt-2 flex items-center h-5">
							<label for="vm" class="w-[89px]">Vertical margin</label>
							<div class="flex-1 h-full flex bg-white border border-[#a5a5a5] rounded-[3px]"><input id="vm" class="flex-1 min-w-0 pl-[3px]" value="0.00 mm"><span class="w-[14px] flex flex-col items-center justify-center border-l border-[#a5a5a5] bg-[#f4f4f4]"><svg class="size-2"><use href="#up"/></svg><svg class="size-2"><use href="#dn"/></svg></span></div>
						</div>
						<p class="mt-[7px]">Horizontal alignment</p>
						<div class="mt-[7px] flex gap-3 [&>label]:flex [&>label]:items-center [&>label]:gap-[5px]">
							<label><input type="radio" name="ha">Left</label><label><input type="radio" name="ha" checked>Center</label><label><input type="radio" name="ha">Right</label><label><input type="radio" name="ha">Justify</label>
						</div>
						<p class="mt-[10px]">Vertical alignment</p>
						<div class="mt-[7px] flex gap-3 [&>label]:flex [&>label]:items-center [&>label]:gap-[5px]">
							<label><input type="radio" name="va">Top</label><label><input type="radio" name="va" checked>Middle</label><label><input type="radio" name="va">Bottom</label>
						</div>
					</fieldset>
					<div class="mt-2 space-y-[10px] pl-1 [&>h4]:gap-[9px] [&_input]:appearance-none [&_input]:size-[14px] [&_input]:bg-white [&_input]:border [&_input]:border-[#b9b9b9] [&_label]:flex [&_label]:gap-[6px] [&_svg]:w-[7px] [&_svg]:h-[11px]">
						<h4><svg viewBox="0 0 7 11"><path d="M0 0v11l7-5.500z" fill="#333"/></svg>Position and Size</h4>
						<h4><svg viewBox="0 0 7 11"><path d="M0 0v11l7-5.500z" fill="#333"/></svg>Rotation</h4>
						<h4><svg viewBox="0 0 7 11"><path d="M0 0v11l7-5.500z" fill="#333"/></svg><label><input type="checkbox">Frame</label></h4>
						<h4><svg viewBox="0 0 7 11"><path d="M0 0v11l7-5.500z" fill="#333"/></svg><label><input type="checkbox">Background</label></h4>
						<h4><svg viewBox="0 0 7 11"><path d="M0 0v11l7-5.500z" fill="#333"/></svg>Item ID</h4>
					</div>
				</form>
				<div class="w-[14px] shrink-0 flex flex-col border-l border-[#b4b4b4] bg-[#e2e2e2]">
					<button aria-label="Scroll up" class="h-[14px] bg-[#f8f8f8] border-b border-[#b4b4b4] flex items-center justify-center"><svg class="size-[9px]"><use href="#up"/></svg></button>
					<div class="h-[412px] bg-linear-to-r from-[#fdfdfd] to-[#f0f0f0] border-b border-[#b4b4b4]"></div>
					<button aria-label="Scroll down" class="mt-auto h-[14px] bg-[#f8f8f8] border-t border-[#b4b4b4] flex items-center justify-center"><svg class="size-[9px]"><use href="#dn"/></svg></button>
				</div>
			</div>
		</aside>
	</main>

	<footer class="h-7 shrink-0 flex items-center pt-px pl-[6px] pr-[2px]">
		<span class="mr-auto">1 item selected</span>
		<span class="w-[107px]">x: 309.938 mm</span><span class="w-[105px]">y: 67.4505 mm</span><span class="w-[107px]">page: 1</span>
		<div class="relative w-[108px] h-[22px]">
			<select aria-label="Zoom level" class="appearance-none size-full pl-[3px] rounded-[3px] border border-[#a5a5a5] bg-white"><option>111.7%</option></select>
			<svg class="absolute right-px top-px w-[19px] h-5 p-[5px] bg-[#f7f7f7] border-l border-[#a5a5a5] pointer-events-none"><use href="#dn"/></svg>
		</div>
		<input type="range" aria-label="Zoom" min="0" max="100" value="11" class="ml-[7px] w-[99px] h-[14px] appearance-none bg-transparent [&::-webkit-slider-runnable-track]:h-[5px] [&::-webkit-slider-runnable-track]:rounded-full [&::-webkit-slider-runnable-track]:bg-[#d6d6d6] [&::-webkit-slider-runnable-track]:border [&::-webkit-slider-runnable-track]:border-[#b4b4b4] [&::-webkit-slider-thumb]:appearance-none [&::-webkit-slider-thumb]:size-[13px] [&::-webkit-slider-thumb]:-mt-[5px] [&::-webkit-slider-thumb]:rounded-[3px] [&::-webkit-slider-thumb]:bg-[#fbfbfb] [&::-webkit-slider-thumb]:border [&::-webkit-slider-thumb]:border-[#a5a5a5]">
	</footer>

<script>
	const get = id => document.getElementById(id)
	const MM = 3.588 // px per millimetre at this zoom

	// rulers
	let h = "", v = ""
	for (let mm = -34; mm <= 328; mm += 2) {
		const x = Math.round(141 + mm * MM) + .5
		if (x < 19) continue
		const top = mm % 20 == 0 ? 1 : mm % 10 == 0 ? 13 : 16
		h += `<path d="M${x} ${top}V20" stroke="#333"/>`
		if (mm % 20 == 0) h += `<text x="${x}" y="12">${mm}</text>`
	}
	h += `<path d="M1253.5 1V20" stroke="#e00"/>`
	get("hruler").innerHTML = h
	for (let mm = -14; mm <= 226; mm += 2) {
		const y = Math.round(55 + mm * MM) + .5
		const left = mm % 20 == 0 ? 0 : mm % 10 == 0 ? 12 : 15
		v += `<path d="M${left} ${y}H19" stroke="#333"/>`
		if (mm % 20 == 0) v += `<text text-anchor="end" transform="translate(11 ${y + 2}) rotate(-90)">${mm}</text>`
	}
	v += `<path d="M0 297.5H19" stroke="#e00"/>`
	get("vruler").innerHTML = v

	// charts
	const hours = ["06:00", "09:00", "12:00", "15:00", "18:00", "21:00", "00:00", "03:00", "06:00"]
	function axes(x0, step, top, bottom, ys, yOf, title, xtitle) {
		let s = ""
		for (const y of ys) {
			const py = Math.round(yOf(y)) + .5
			s += `<path d="M766 ${py}H1201" stroke="#dcdcdc"/><text x="764" y="${py + 3}" text-anchor="end">${y}</text>`
		}
		hours.forEach((t, i) => {
			const px = Math.round(x0 + i * 3 * step) + .5
			s += `<path d="M${px} ${top}V${bottom}" stroke="#d6d6d6"/><text x="${px - 1}" y="${bottom + 9}" text-anchor="middle">${t}</text>`
			if (i == 0 || i == 6) s += `<text x="${px - 1}" y="${bottom + 20}" text-anchor="middle">Feb ${i ? 22 : 21}, 2022</text>`
		})
		s += `<text x="982" y="${bottom + 35}" text-anchor="middle">${xtitle}</text>`
		s += `<text text-anchor="middle" transform="translate(740 ${(top + bottom) / 2}) rotate(-90)">${title}</text>`
		return s
	}
	const rain = [0, 0, .01, 0, .39, 3.86, .21, .02, .01, 0, 0, 0, 0, 0, 0, 0, 0, 0, 0, 0, 0, 0, 0, 0, 0]
	const ry = val => 509.5 - val * 60.8
	let b = axes(773, 17.46, 263, 510, [0, .5, 1, 1.5, 2, 2.5, 3, 3.5, 4], ry, "Precipitation [mm]", "Time")
	rain.forEach((val, i) => {
		b += `<rect x="${773.3 + i * 17.46 - 7}" y="${ry(val)}" width="14" height="${510 - ry(val)}" fill="#8fbada" stroke="#74a8d0" stroke-width=".8"/>`
	})
	get("bars").innerHTML = b

	const temp = [4.88, 4.9, 5.55, 5.54, 5.56, 5.43, 6.66, 7.02, 7.3, 7.16, 7.32, 7.34, 7.19, 7.02, 6.84, 6.86, 6.64, 6.15, 5.86, 5.86, 5.5, 5.07, 4.57, 4.16, 3.72]
	const ty = val => 900.3 - (val - 3.5) * 62.4
	let t = axes(790, 16.1, 645, 900, [3.5, 4, 4.5, 5, 5.5, 6, 6.5, 7, 7.5], ty, "Temperature (°C)", "time")
	const pts = temp.map((val, i) => [790.2 + i * 16.1, ty(val)])
	t += `<polyline points="${pts.join(" ")}" fill="none" stroke="#ff8f8f"/>`
	for (const [x, y] of pts) t += `<circle cx="${x}" cy="${y}" r="2.8" fill="red"/>`
	get("temps").innerHTML = t

	// place names, roads and fields
	let seed = 7
	const rnd = () => (seed = seed * 16807 % 2147483647) / 2147483647
	let m = ""
	for (let i = 0; i < 300; i++) {
		let x = 32 + rnd() * 1490, y = 200 + rnd() * 1345, a = rnd() * 6.28, d = `M${x | 0} ${y | 0}`
		for (let k = 0; k < 12; k++) {
			a += (rnd() - .5) * .9
			x += Math.cos(a) * 24
			y += Math.sin(a) * 18
			d += `L${x | 0} ${y | 0}`
		}
		m += `<path d="${d}" stroke="${["#b8527f", "#b04a78", "#8a6fa8", "#d99a72", "#5fa877", "#6f8fc8"][i % 6]}" stroke-width="${i % 3 ? 1.6 : 2.2}" opacity=".6"/>`
	}
	for (let i = 0; i < 1300; i++) {
		const x = 32 + rnd() * 1490 | 0, y = 200 + rnd() * 1345 | 0
		m += `<path d="M${x} ${y}h${6 + rnd() * 18 | 0}" stroke="#26323f" stroke-width="2" stroke-dasharray="5 2 8 2" opacity=".7"/>`
	}
	get("towns").innerHTML = m
</script>
</body>
</html>
